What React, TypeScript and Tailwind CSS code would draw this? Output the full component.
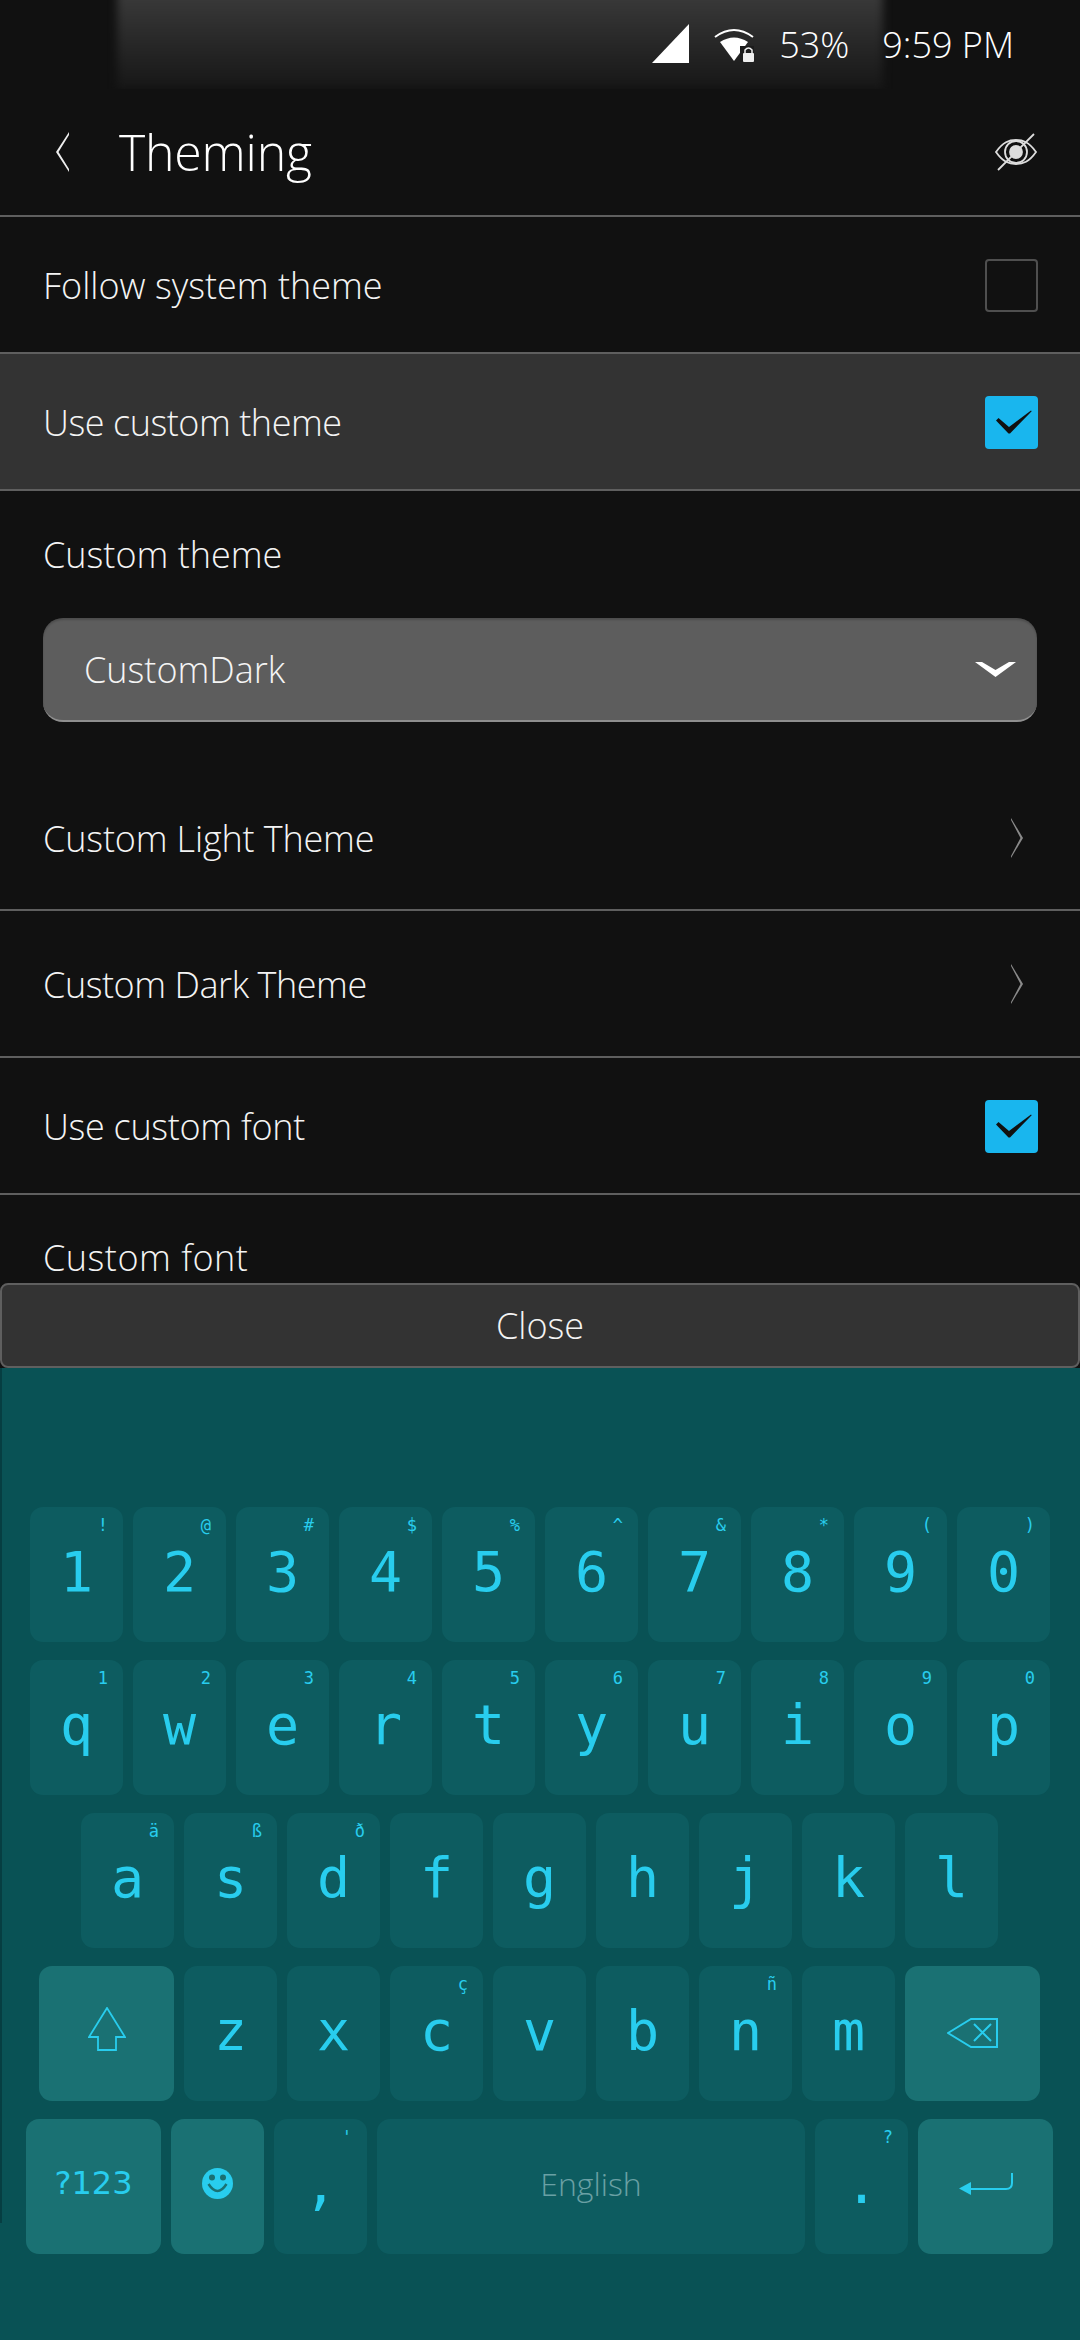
import React from "react";

const sans = "font-['Open_Sans','Noto_Sans',sans-serif]";
const mono = "font-['DejaVu_Sans_Mono','Liberation_Mono',monospace]";
const label = "text-[36px] font-light text-[#f4f4f4]";

function Check() {
  return (
    <div className="w-[53px] h-[53px] mt-[2px] rounded-[4px] bg-[#19b6ee]">
      <svg width="53" height="53" viewBox="0 0 53 53">
        <path d="M11 24.5 L13.5 22 L24 31 L46 14.5 L46.7 15.3 L25 37.5 L23.5 37.5 Z" fill="#111" />
      </svg>
    </div>
  );
}

function Chevron() {
  return (
    <svg width="14" height="40" viewBox="0 0 14 40" fill="#8a8a8a">
      <path d="M1 0 L13 20 L1 40 L1 38 L10.5 20 L1 2 Z" />
    </svg>
  );
}

function Row({ text, right, className = "", h, tracking = "" }: { text: string; right?: React.ReactNode; className?: string; h: string; tracking?: string }) {
  return (
    <div className={`flex items-center justify-between pl-[43px] pr-[42px] border-b-2 border-[#5f5f5f] shrink-0 ${h} ${className}`}>
      <span className={`${label} ${tracking} mt-[2px]`}>{text}</span>
      {right}
    </div>
  );
}

function Key({ c, s, w = "w-[93px]", action, children }: { c?: string; s?: string; w?: string; action?: boolean; children?: React.ReactNode }) {
  return (
    <div className={`relative h-[135px] shrink-0 rounded-[13px] ${w} ${action ? "bg-[#1a7173]" : "bg-[#0d5c60]"} flex justify-center ${mono} text-[#28cdee]`}>
      {s && <span className="absolute right-[15px] top-[6px] text-[17px] leading-[24px]">{s}</span>}
      {c && <span className="text-[55px] leading-[66px] mt-[32px]">{c}</span>}
      {children}
    </div>
  );
}

function KeyRow({ children, className = "" }: { children: React.ReactNode; className?: string }) {
  return <div className={`flex gap-[10px] ${className}`}>{children}</div>;
}

const r1 = [["1", "!"], ["2", "@"], ["3", "#"], ["4", "$"], ["5", "%"], ["6", "^"], ["7", "&"], ["8", "*"], ["9", "("], ["0", ")"]];
const r2 = [["q", "1"], ["w", "2"], ["e", "3"], ["r", "4"], ["t", "5"], ["y", "6"], ["u", "7"], ["i", "8"], ["o", "9"], ["p", "0"]];
const r3 = [["a", "ä"], ["s", "ß"], ["d", "ð"], ["f", ""], ["g", ""], ["h", ""], ["j", ""], ["k", ""], ["l", ""]];
const r4 = [["z", ""], ["x", ""], ["c", "ç"], ["v", ""], ["b", ""], ["n", "ñ"], ["m", ""]];

export default function App() {
  return (
    <div className={`w-[1080px] h-[2340px] overflow-hidden bg-[#111111] flex flex-col ${sans}`}>
      <div className="relative h-[89px] shrink-0 flex items-center justify-end pr-[66px] gap-[33px] text-white">
        <div className="absolute left-[117px] w-[766px] top-[-10px] h-[99px] bg-gradient-to-b from-[#3c3c3c] to-[#171717] blur-[4px]" />
        <div className="absolute left-0 right-0 top-[89px] h-[10px] bg-[#111111]" />
        <div className="relative flex items-center gap-[25px]">
          <svg className="-mt-[2px]" width="37" height="39" viewBox="0 0 37 39" fill="#fff"><path d="M0 39 L37 0 V39 Z" /></svg>
          <svg width="40" height="34" viewBox="0 0 40 34" fill="none">
            <path d="M1 9 Q20 -5 39 9" stroke="#fff" strokeWidth="2" />
            <path d="M6 14 Q20 5 34 14 L20 33 Z" fill="#fff" />
            <rect x="26" y="18" width="14" height="16" fill="#1b1b1b" />
            <rect x="29" y="25" width="11" height="9" fill="#eee" rx="1" />
            <path d="M31 25 V22 Q34.5 18 38 22 V25" stroke="#eee" strokeWidth="1.5" />
          </svg>
        </div>
        <span className="relative text-[36px] font-light -ml-[8px]">53%</span>
        <span className="relative text-[36px] font-light">9:59 PM</span>
      </div>

      <div className="h-[128px] shrink-0 flex items-center justify-between pl-[54px] pr-[43px] border-b-2 border-[#5f5f5f]">
        <div className="flex items-center gap-[49px]">
          <svg width="16" height="42" viewBox="0 0 16 42" fill="#eee"><path d="M15 1 L2 21 L15 41 L15 38 L4.5 21 L15 4 Z" /></svg>
          <span className="text-[50px] font-light text-white tracking-[-0.2px] leading-[60px]">Theming</span>
        </div>
        <svg width="42" height="38" viewBox="0 0 42 38" fill="none" stroke="#ddd" strokeWidth="1.8">
          <path d="M1 19 C8 9 14 7 21 7 C28 7 34 9 41 19 C34 29 28 31 21 31 C14 31 8 29 1 19 Z" />
          <circle cx="21" cy="19" r="11" />
          <circle cx="21" cy="19" r="6" fill="#ddd" />
          <path d="M3 37 L39 1" />
        </svg>
      </div>

      <Row text="Follow system theme" h="h-[137px]" right={<div className="w-[53px] h-[53px] mt-[2px] rounded-[4px] border-2 border-[#4f4f4f]" />} />
      <Row text="Use custom theme" tracking="tracking-[-0.45px]" h="h-[137px]" className="bg-[#333333]" right={<Check />} />

      <div className="h-[127px] shrink-0 flex items-center pl-[43px]">
        <span className={label}>Custom theme</span>
      </div>
      <div className="mx-[43px] h-[104px] shrink-0 rounded-[20px] bg-[#5d5d5d] border-b-2 border-[#8f8f8f] shadow-[inset_0_2px_2px_rgba(0,0,0,0.18)] flex items-center justify-between pl-[41px] pr-[21px]">
        <span className={`${label} mt-[2px]`}>CustomDark</span>
        <svg width="41" height="15" viewBox="0 0 41 15" fill="#fff"><path d="M0 0 H7 L20.5 8 L34 0 H41 L20.5 15 Z" /></svg>
      </div>

      <Row text="Custom Light Theme" tracking="tracking-[-0.15px]" h="h-[189px] pt-[44px]" right={<div className="pr-[14px]"><Chevron /></div>} />
      <Row text="Custom Dark Theme" tracking="tracking-[-0.45px]" h="h-[147px]" right={<div className="pr-[14px]"><Chevron /></div>} />
      <Row text="Use custom font" tracking="tracking-[-0.3px]" h="h-[137px]" right={<Check />} />

      <div className="h-[88px] shrink-0 overflow-hidden flex items-end pl-[43px]">
        <span className={`${label} tracking-[0.5px] -mb-[2px]`}>Custom font</span>
      </div>

      <div className="h-[85px] shrink-0 rounded-[8px] bg-[#333333] border-2 border-[#5f5f5f] flex items-center justify-center">
        <span className={label}>Close</span>
      </div>

      <div className="relative flex-1 bg-[#095255] pt-[139px] flex flex-col gap-[18px]">
        <div className="absolute left-0 top-0 w-[2px] h-[855px] bg-[#063e42]" />
        <KeyRow className="pl-[30px]">{r1.map(([c, s]) => <Key key={c} c={c} s={s} />)}</KeyRow>
        <KeyRow className="pl-[30px]">{r2.map(([c, s]) => <Key key={c} c={c} s={s} />)}</KeyRow>
        <KeyRow className="pl-[81px]">{r3.map(([c, s]) => <Key key={c} c={c} s={s} />)}</KeyRow>
        <KeyRow className="pl-[39px]">
          <Key w="w-[135px]" action>
            <svg className="mt-[41px]" width="38" height="44" viewBox="0 0 38 44" fill="none" stroke="#28cdee" strokeWidth="1.8"><path d="M19 1 L37 30 H28 V43 H10 V30 H1 Z" /></svg>
          </Key>
          {r4.map(([c, s]) => <Key key={c} c={c} s={s} />)}
          <Key w="w-[135px]" action>
            <svg className="mt-[52px]" width="52" height="30" viewBox="0 0 52 30" fill="none" stroke="#28cdee" strokeWidth="2"><path d="M1 15 L24 1 H50 V29 H24 Z" /><path d="M27 6 L44 23 M44 6 L27 23" /></svg>
          </Key>
        </KeyRow>
        <KeyRow className="pl-[26px]">
          <Key w="w-[135px]" action><span className="font-['DejaVu_Sans',sans-serif] text-[32px] leading-[40px] mt-[44px]">?123</span></Key>
          <Key action>
            <svg className="mt-[49px]" width="31" height="31" viewBox="0 0 31 31"><circle cx="15.5" cy="15.5" r="15.5" fill="#28cdee" /><circle cx="10" cy="9.5" r="3" fill="#1a7173" /><circle cx="21" cy="9.5" r="3" fill="#1a7173" /><path d="M6.5 16 Q15.5 30 24.5 16" fill="none" stroke="#1a7173" strokeWidth="2.5" /></svg>
          </Key>
          <Key c="," s="'" />
          <Key w="w-[428px]"><span className={`${sans} font-light text-[32px] leading-[40px] mt-[45px] text-[#6aa0a4]`}>English</span></Key>
          <Key c="." s="?" />
          <Key w="w-[135px]" action>
            <svg className="mt-[54px]" width="54" height="22" viewBox="0 0 54 22" fill="none" stroke="#28cdee" strokeWidth="2"><path d="M53 0 V10 Q53 16 47 16 H12" /><path d="M0 15.5 L12 9 V22 Z" fill="#28cdee" stroke="none" /></svg>
          </Key>
        </KeyRow>
      </div>
    </div>
  );
}
